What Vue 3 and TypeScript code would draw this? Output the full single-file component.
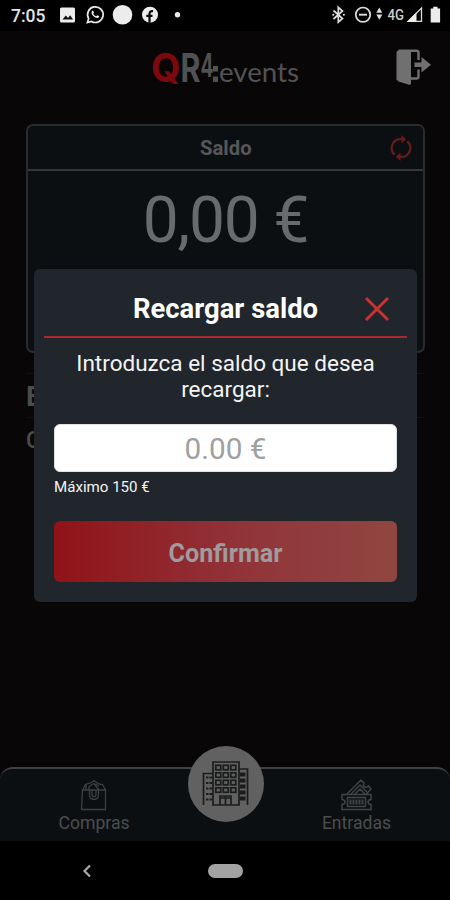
<script setup lang="ts">
import { ref } from 'vue'

const balance = ref('0,00 €')
const amount = ref('')
const windowRows = [0, 1, 2, 3]
const windowCols = [0, 1, 2]
const sideRows = [0, 1, 2, 3, 4]
</script>

<template>
  <div class="screen">
    <header class="status">
      <span class="clock">7:05</span>
      <svg class="notifications" width="130" height="24" viewBox="56 4 130 24">
        <rect x="60" y="8.500" width="15" height="15" rx="1.500" fill="#ececec" />
        <path d="M62.500 20.500l3.300-4 2.300 2.400 2-2.700 3 4.300z" fill="#111" />
        <path d="M87.400 23.500l1.200-4a7.800 7.800 0 1 1 2.900 2.900z" fill="none" stroke="#ececec" stroke-width="1.700" />
        <path d="M92.300 11.700c-1.400 1.100-.8 3.500 1 5.400 1.900 2 4.500 2.700 5.700 1.200.6-.8.3-1.100-1.800-2-.8.7-1 1.100-1.600.8-1.300-.6-2-1.500-2.300-2.300.5-.8.8-.8.4-1.700-.4-1-.8-1.800-1.400-1.400z" fill="#ececec" />
        <circle cx="122.500" cy="15.700" r="9.800" fill="#ececec" />
        <circle cx="150" cy="15.700" r="8" fill="#ececec" />
        <path d="M149.500 23.700v-9c0-2 1.300-2.800 3.500-2.500M146.300 16.800h6.200" fill="none" stroke="#090909" stroke-width="2.200" />
        <circle cx="177.500" cy="15.700" r="2.700" fill="#ececec" />
      </svg>
      <svg class="signals" width="114" height="24" viewBox="330 4 114 24">
        <path d="M333.500 11.500l9 8-4.200 3.600V8.300l4.200 3.700-9 8" fill="none" stroke="#ddd" stroke-width="1.700" />
        <path d="M333.200 15.700h.1M343.800 15.700h.1" stroke="#ddd" stroke-width="2" stroke-linecap="round" />
        <circle cx="363" cy="15.700" r="7.200" fill="none" stroke="#ddd" stroke-width="1.700" />
        <path d="M359 15.700h8" stroke="#ddd" stroke-width="1.900" />
        <path d="M376.300 13.700l3-5.300 3 5.300zM376.300 15.500l3 5.300 3-5.300z" fill="#ddd" />
        <text x="387.500" y="20.800" class="network" textLength="16.500" lengthAdjust="spacingAndGlyphs">4G</text>
        <path d="M421.500 9v13.300h-13.300z" fill="none" stroke="#ddd" stroke-width="1.300" />
        <path d="M406.800 23l9.700-9.700V23z" fill="#ececec" />
        <path d="M430.700 9.500h2.500V7.700h4.300v1.800h2.600v14h-9.400z" fill="#ececec" />
      </svg>
    </header>

    <main class="page">
      <div class="brand-row">
        <svg class="brand" width="150" height="60" viewBox="151 39 150 60">
          <text class="brand-bold red" x="151" y="82" textLength="29.500" lengthAdjust="spacingAndGlyphs">Q</text>
          <text class="brand-bold" x="180.500" y="82" textLength="20" lengthAdjust="spacingAndGlyphs">R</text>
          <text class="brand-four" x="200.500" y="76.500" textLength="13" lengthAdjust="spacingAndGlyphs">4</text>
          <path d="M213 66h5v5.500h-5zM213 76.500h5V82h-5z" fill="#505152" />
          <text class="brand-light" x="219" y="82" textLength="80" lengthAdjust="spacingAndGlyphs">events</text>
        </svg>
        <svg class="logout" width="38" height="38" viewBox="395 48 38 38">
          <path d="M399 49.500h11l1 3v31l-1 1.500-11.500-3.500-2-2V52z" fill="#707070" />
          <path d="M410 50.800h6.500q2 0 2 2V60M410 78.500h6.500q2 0 2-2V69.500" fill="none" stroke="#707070" stroke-width="2.400" />
          <path d="M414.500 62.500h8v4.500h-8z" fill="#707070" />
          <path d="M421.500 57l9.500 7.700-9.500 7.800z" fill="#707070" />
        </svg>
      </div>

      <section class="card">
        <div class="card-head">
          <span>Saldo</span>
          <svg class="refresh" width="24" height="28" viewBox="0 0 24 28">
            <path d="M5.700 20.600A8.800 8.800 0 0 1 12 5.200h2M18.300 7.400A8.800 8.800 0 0 1 12 22.800h-2" fill="none" stroke="#661b1d" stroke-width="2.200" />
            <path d="M12.500 1l4.600 4.200-4.600 4.200zM11.500 18.600l-4.600 4.200 4.600 4.200z" fill="#661b1d" />
          </svg>
        </div>
        <div class="balance">{{ balance }}</div>
      </section>

      <h2 class="row-title">E</h2>
      <p class="row-text">C</p>
    </main>

    <nav class="tabs">
      <div class="tab">
        <svg width="30" height="34" viewBox="0 0 30 34" fill="none" stroke="#3d4042" stroke-width="1.300">
          <path d="M3.500 12h23v19.500h-24zM3.500 12l3-5.500 6-2L15 2.500l4.500 3.500 4 .5 3 5.500M7 6.500V12M10 12V8.500l5-3 5 6.500M16 6l4 2" />
          <path d="M10.500 12v4.500q0 5 4.500 5t4.500-5V12M13 12v4q0 2.700 2 2.700t2-2.700v-4" />
        </svg>
        <span>Compras</span>
      </div>
      <div class="tab">
        <svg width="34" height="34" viewBox="0 0 34 34" fill="none" stroke="#414446" stroke-width="1.500">
          <path d="M2 16.500h29v5q-3 .3-3 2.500t3 2.500v5H2v-5q3-.3 3-2.500t-3-2.500zM7.500 19.500h18v9h-18z" />
          <path d="M7 16L21 2l3 3q-1.500 3 1 4t3.500-1l2.500 3-5 5.500M11 16l9-9 7 7M15 16l5-5 5 5" />
          <path d="M10.500 21.500v5M13.500 21.500v5M16.500 21.500v5M19.500 21.500v5M22.500 21.500v5" stroke-width="2" />
        </svg>
        <span>Entradas</span>
      </div>
      <div class="home">
        <svg width="48" height="48" viewBox="0 0 48 48" fill="none" stroke="#1b1c1d" stroke-width="1.700">
          <path d="M11 45V2h26v43zM1.500 45V13.500H11M37 9h8.500v36M18 45V36h11v9M23.500 36v9M18 38h11" />
          <g v-for="r in windowRows" :key="r">
            <rect v-for="c in windowCols" :key="c" :x="13.8 + c * 7.500" :y="5.300 + r * 7.500" width="5" height="4.500" />
          </g>
          <g v-for="r in sideRows" :key="'s' + r" stroke-width="2">
            <path :d="`M4 ${17.500 + r * 5.500}h2.500M7.500 ${17.500 + r * 5.500}h2.500`" />
            <path :d="`M39 ${13.500 + r * 6}h3.500v2H39z`" />
          </g>
        </svg>
      </div>
    </nav>

    <footer class="system">
      <svg class="back" width="12" height="16" viewBox="0 0 12 16"><path d="M9 2.500L3.500 8 9 13.500" fill="none" stroke="#a9a9a9" stroke-width="2.200" /></svg>
      <span class="pill"></span>
    </footer>

    <div class="modal" role="dialog">
      <div class="modal-head">
        <h1>Recargar saldo</h1>
        <svg class="close" width="26" height="26" viewBox="0 0 26 26"><path d="M2 2l22 22M24 2L2 24" stroke="#cb3132" stroke-width="2.900" /></svg>
      </div>
      <div class="modal-body">
        <p class="prompt">Introduzca el saldo que desea<br>recargar:</p>
        <input v-model="amount" class="field" placeholder="0.00 €">
        <small>Máximo 150 €</small>
        <button type="button">Confirmar</button>
      </div>
    </div>
  </div>
</template>

<style>
body { background: #080607; }
</style>

<style scoped>
* { box-sizing: border-box; }
.screen {
  position: relative;
  display: flex;
  flex-direction: column;
  width: 450px;
  height: 900px;
  overflow: hidden;
  background: #080607;
  font-family: Roboto, sans-serif;
}
svg { display: block; flex: none; }
.status {
  display: flex;
  align-items: center;
  height: 31px;
  padding: 0 6px 1px 11px;
  background: #000;
}
.clock { width: 45px; color: #e3e3e3; font-size: 17.500px; font-weight: 500; line-height: 30px; padding-top: 1px; }
.signals { margin-left: auto; }
.network { font: 500 15px Roboto, sans-serif; fill: #ccc; }
.page { flex: 1; padding: 8px 25px 0 26px; }
.brand-row { display: flex; height: 85px; padding-left: 125px; }
.logout { margin: 9px 0 0 94px; }
.brand-bold { font: 700 40px Inter, sans-serif; fill: #505152; }
.brand-four { font: 700 32px Inter, sans-serif; fill: #505152; }
.brand-bold.red { fill: #7d090e; }
.brand-light { font: 400 27px Lato, sans-serif; fill: #525354; }
.card {
  height: 229px;
  border: 2px solid #292b2d;
  border-radius: 7px;
  background: #0c0f12;
}
.card-head {
  display: flex;
  align-items: center;
  height: 45px;
  padding: 1px 10px 0 172px;
  border-bottom: 2px solid #343638;
  color: #555759;
  font-size: 20.300px;
  font-weight: 700;
}
.refresh { margin-left: auto; }
.balance { color: #696a6b; font-size: 64px; letter-spacing: -1.100px; line-height: 76px; padding-top: 12px; text-align: center; }
.row-title {
  height: 45px;
  margin: 20px 0 0;
  border-top: 1px solid #111011;
  border-bottom: 1px solid #111011;
  color: #4b4c4d;
  font-size: 28px;
  line-height: 45px;
}
.row-text { margin: 7px 0 0; color: #4b4c4d; font-size: 23px; font-weight: 500; line-height: 32px; }
.tabs {
  position: relative;
  display: flex;
  justify-content: space-between;
  height: 74px;
  padding: 9px 43.500px 0 44px;
  border-top: 2px solid #3f4142;
  border-radius: 13px 13px 0 0;
  background: #0c0f12;
}
.tab { display: flex; flex-direction: column; align-items: center; width: 100px; color: #4b4d4f; font-size: 17.600px; line-height: 22px; }
.home {
  position: absolute;
  top: -23px;
  left: 188px;
  display: flex;
  align-items: center;
  justify-content: center;
  width: 76px;
  height: 76px;
  border-radius: 50%;
  background: #616161;
}
.system { display: flex; align-items: center; height: 59px; padding: 0 0 0 81px; background: #000; }
.pill { width: 35px; height: 14px; margin-left: 115px; border-radius: 7px; background: #a3a3a3; }
.modal {
  position: absolute;
  top: 269px;
  left: 34px;
  width: 383px;
  height: 332.500px;
  border-radius: 6px;
  background: #20262c;
  color: #f4f4f4;
}
.modal-head {
  display: flex;
  align-items: center;
  height: 69px;
  margin: 0 10px;
  padding: 13px 17px 0 89px;
  border-bottom: 2px solid #a42a2f;
}
h1 { margin: 0; color: #fff; font-size: 27.400px; line-height: 32px; white-space: nowrap; }
.close { margin-left: auto; }
.modal-body { display: flex; flex-direction: column; padding: 12px 20px 0; }
.prompt { margin: 0; font-size: 22.500px; line-height: 26px; text-align: center; white-space: nowrap; }
.field {
  width: 100%;
  height: 48px;
  margin-top: 22px;
  padding: 0;
  border: 1px solid #dfe2e5;
  border-radius: 6px;
  background: #fff;
  font: 29.700px Roboto, sans-serif;
  text-align: center;
  outline: 0;
}
.field::placeholder { color: #a0a0a0; opacity: 1; }
small { margin-top: 5px; font-size: 15.100px; line-height: 20px; }
button {
  height: 61px;
  margin-top: 24px;
  padding: 3px 0 0;
  border: 0;
  border-radius: 6px;
  background: linear-gradient(90deg, #901318, #91343a 55%, #904640);
  color: #a09b9c;
  font: 700 25.200px Roboto, sans-serif;
}
</style>
